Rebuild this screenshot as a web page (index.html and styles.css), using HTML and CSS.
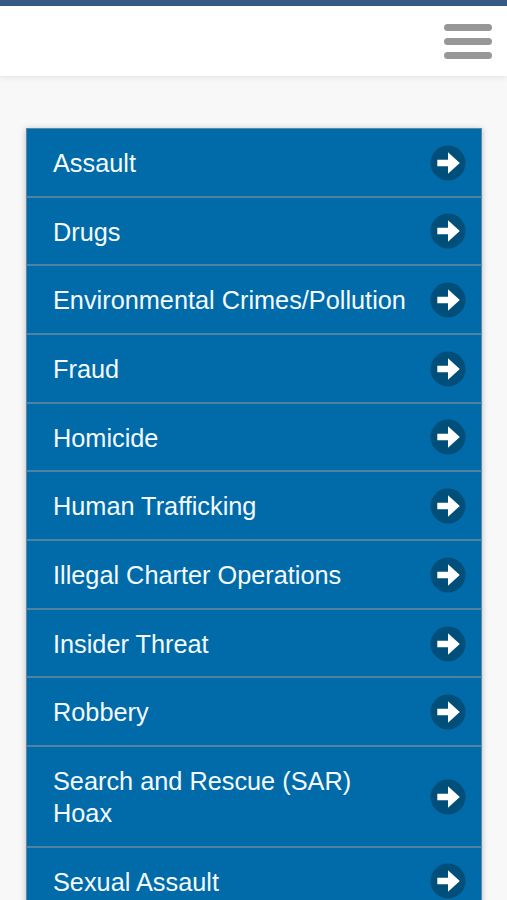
FILE: index.html
```html
<!DOCTYPE html>
<html lang="en">
<head>
  <meta charset="UTF-8">
  <meta name="viewport" content="width=device-width, initial-scale=1">
  <title>Report a Tip</title>
  <link rel="stylesheet" href="styles.css">
</head>
<body>
  <svg class="hidden">
    <symbol id="arrow" viewBox="0 0 36 36">
      <circle cx="18" cy="18" r="17.5" fill="#004f7b"/>
      <path d="M7.3 14.8H18V7.3L29.8 18L18 28.7V21.2H7.3Z" fill="#fff"/>
    </symbol>
  </svg>

  <header class="header">
    <button class="menu-btn" aria-label="Menu">
      <span class="bar"></span>
      <span class="bar"></span>
      <span class="bar"></span>
    </button>
  </header>

  <ul class="list">
    <li class="item"><a href="#">Assault</a><svg class="icon"><use href="#arrow"/></svg></li>
    <li class="item"><a href="#">Drugs</a><svg class="icon"><use href="#arrow"/></svg></li>
    <li class="item"><a href="#">Environmental Crimes/Pollution</a><svg class="icon"><use href="#arrow"/></svg></li>
    <li class="item"><a href="#">Fraud</a><svg class="icon"><use href="#arrow"/></svg></li>
    <li class="item"><a href="#">Homicide</a><svg class="icon"><use href="#arrow"/></svg></li>
    <li class="item"><a href="#">Human Trafficking</a><svg class="icon"><use href="#arrow"/></svg></li>
    <li class="item"><a href="#">Illegal Charter Operations</a><svg class="icon"><use href="#arrow"/></svg></li>
    <li class="item"><a href="#">Insider Threat</a><svg class="icon"><use href="#arrow"/></svg></li>
    <li class="item"><a href="#">Robbery</a><svg class="icon"><use href="#arrow"/></svg></li>
    <li class="item"><a href="#">Search and Rescue (SAR) Hoax</a><svg class="icon"><use href="#arrow"/></svg></li>
    <li class="item"><a href="#">Sexual Assault</a><svg class="icon"><use href="#arrow"/></svg></li>
  </ul>
</body>
</html>
```
FILE: styles.css
```css
* {
  box-sizing: border-box;
}
body {
  margin: 0;
  height: 100vh;
  overflow: hidden;
  background-color: #f8f8f8;
  font-family: "Liberation Sans", Arial, sans-serif;
}
.hidden {
  display: none;
}
.header {
  display: flex;
  justify-content: flex-end;
  height: 76px;
  padding: 18px 15px 0 0;
  background-color: white;
  border-top: 6px solid #365a84;
  box-shadow: 0 1px 6px rgba(0, 0, 0, 0.1);
}
.menu-btn {
  display: flex;
  flex-direction: column;
  gap: 7px;
  width: 48px;
  height: 35px;
  padding: 0;
  background: none;
  border: none;
  cursor: pointer;
}
.bar {
  width: 48px;
  height: 7px;
  border-radius: 4px;
  background-color: #979797;
}
.list {
  list-style-type: none;
  margin: 51.5px 25px 0 26px;
  padding: 0;
  border: 1px solid #5a8aa5;
  box-shadow: 0 1px 6px rgba(0, 0, 0, 0.25);
}
.item {
  display: flex;
  align-items: center;
  justify-content: space-between;
  padding: 19px 15px 16px 26px;
  background-color: #006ba8;
  border-bottom: 2px solid #4d84a2;
}
.item:first-child {
  padding-top: 19.3px;
}
.item a {
  width: 356px;
  color: #f4faff;
  font-size: 25.3px;
  line-height: 31.7px;
  text-decoration: none;
}
/* icon is taller than one text line, keep it from stretching the row */
.icon {
  flex: none;
  width: 36px;
  height: 36px;
  margin: -6px 0 -4px;
}
```
